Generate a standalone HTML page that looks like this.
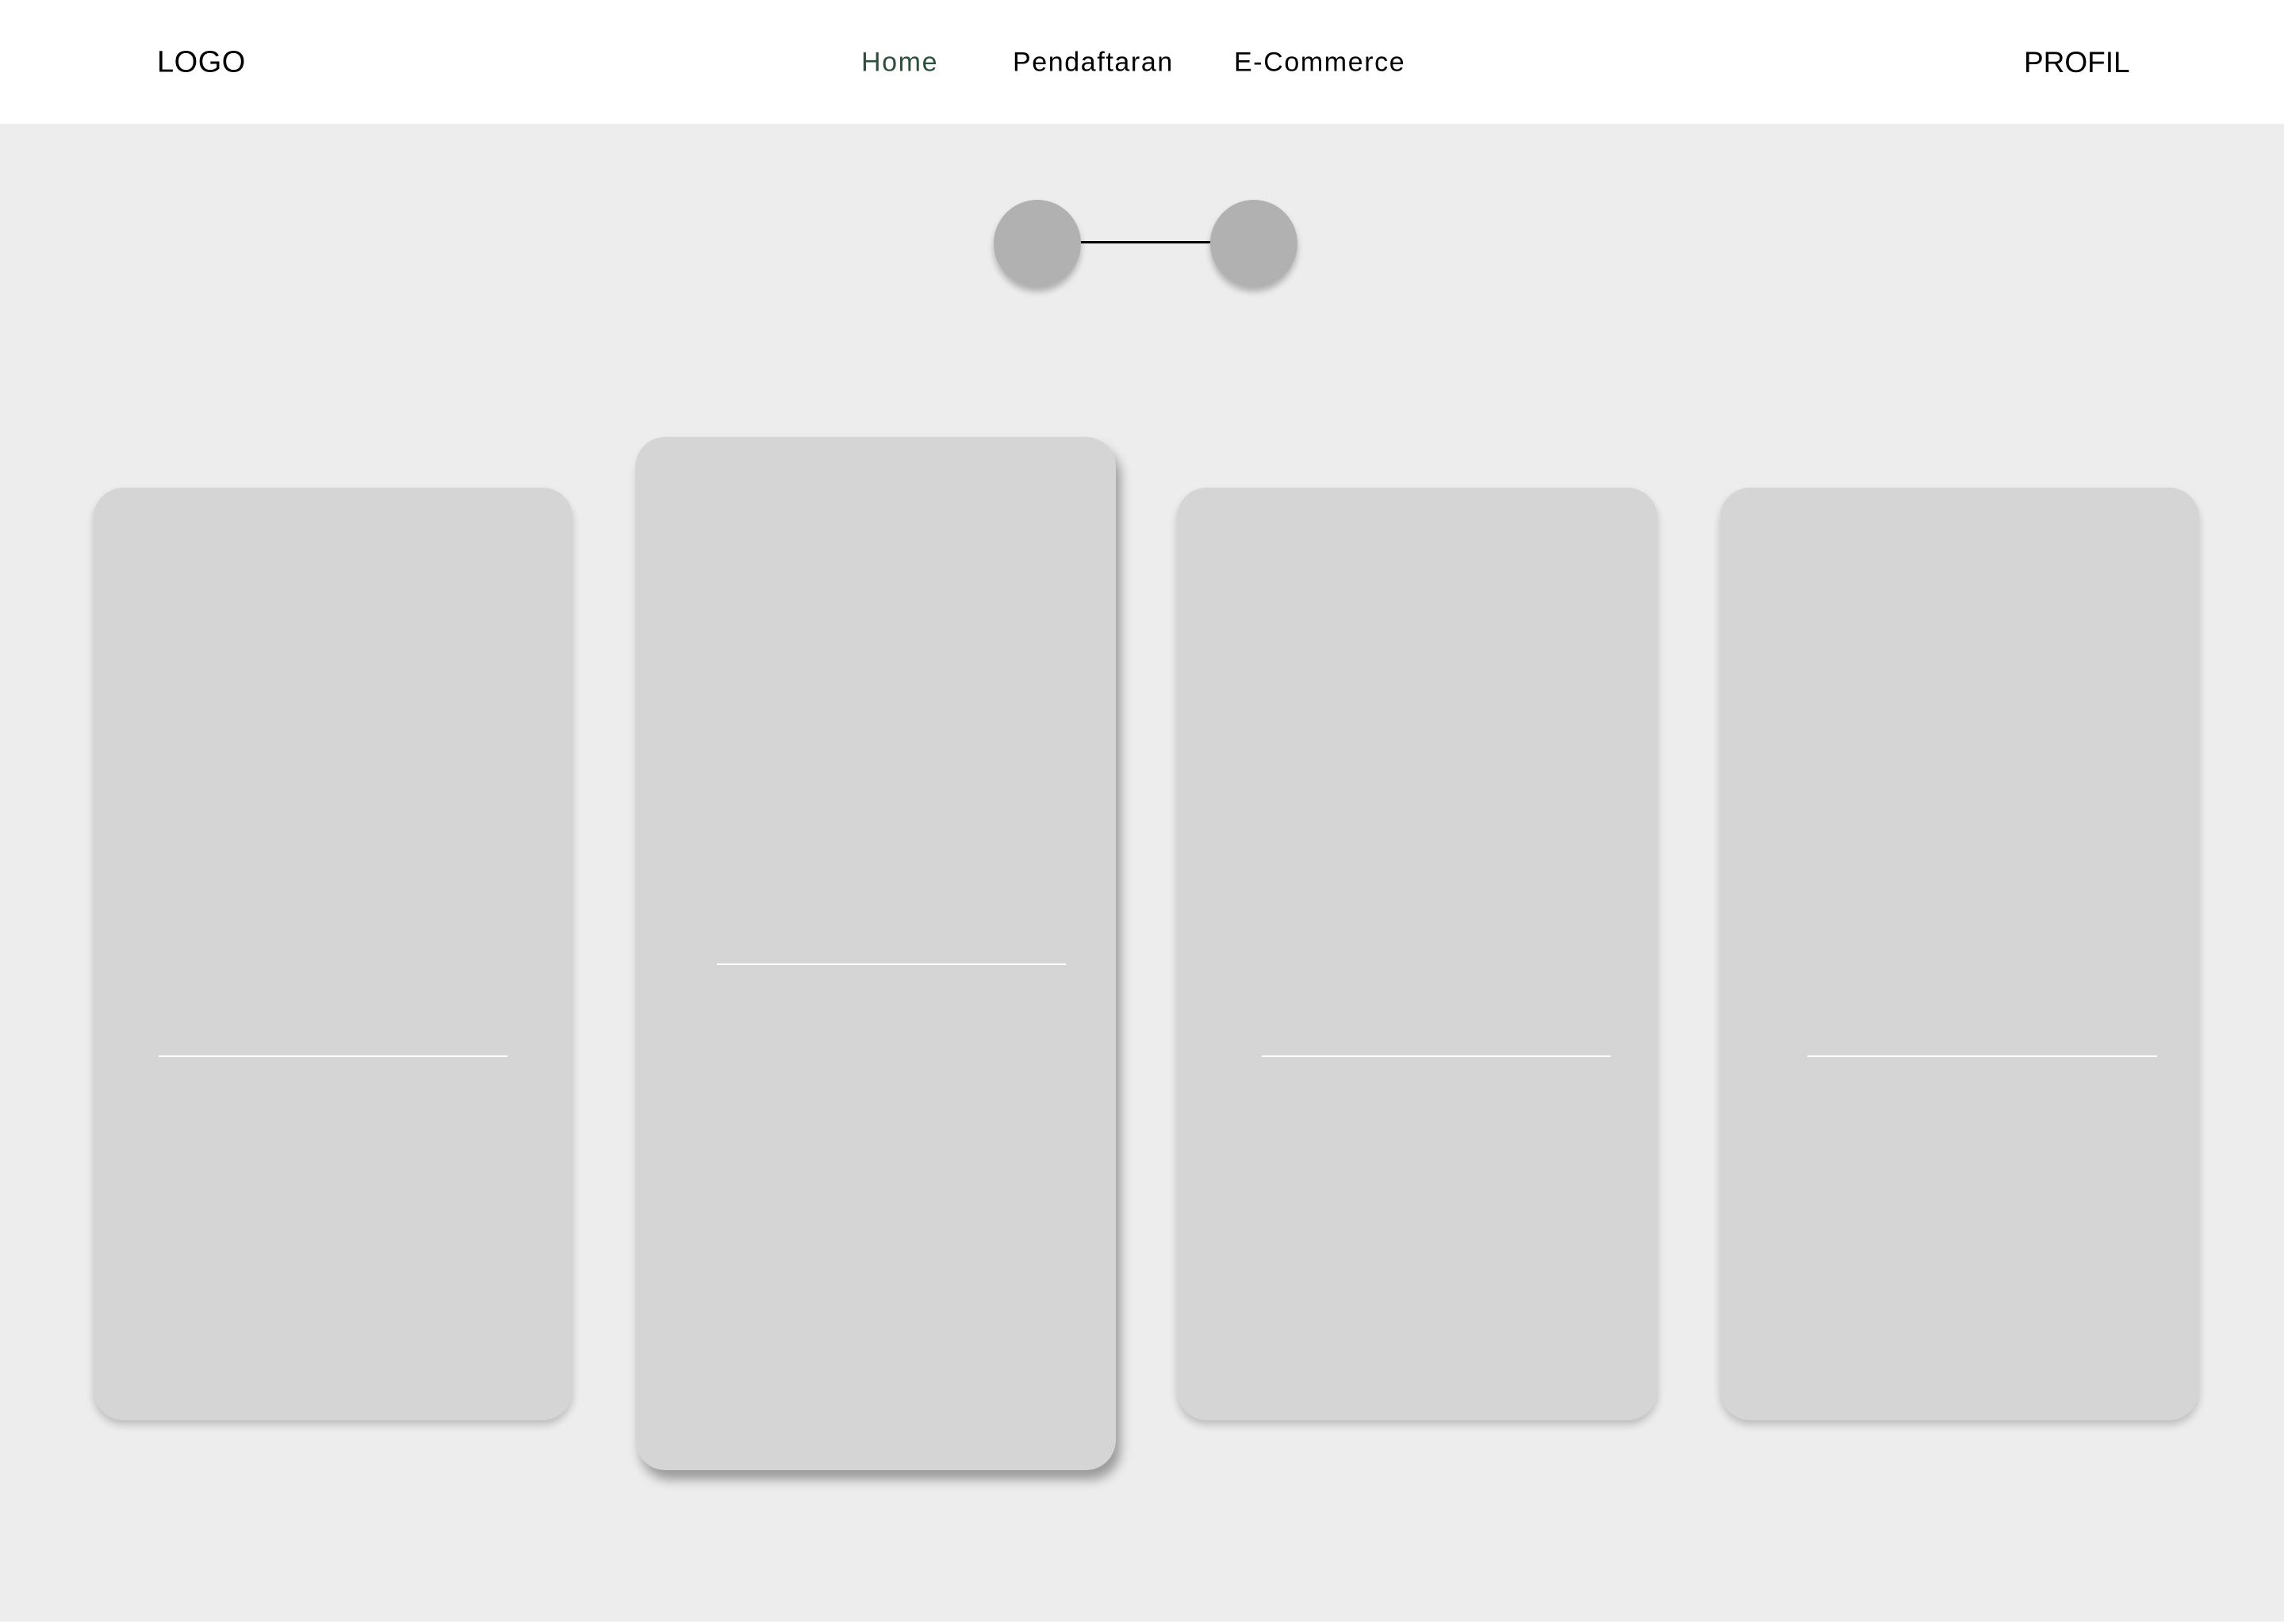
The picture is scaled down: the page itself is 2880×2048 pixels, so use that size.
<!DOCTYPE html>
<html><head><meta charset="utf-8"><style>
*{margin:0;padding:0;box-sizing:border-box}
html,body{width:2880px;height:2048px;overflow:hidden;background:#fff}
body{position:relative;font-family:"Liberation Sans",sans-serif}
.hdr{position:absolute;left:0;top:0;width:2880px;height:156px;background:#fff}
.main{position:absolute;left:0;top:156px;width:2880px;height:1889px;background:#ededed}
.t{position:absolute;top:79px;transform:translateY(-50%);font-size:34px;color:#000;white-space:nowrap;letter-spacing:1.6px}
.c{position:absolute;width:110px;height:110px;border-radius:50%;background:#b1b1b1;box-shadow:0 6px 8px rgba(0,0,0,.25);top:252px}
.card{position:absolute;background:#d5d5d5;border-radius:38px;box-shadow:0 6px 10px rgba(0,0,0,.2)}
.ln{position:absolute;height:2px;background:#fff}
</style></head><body>
<div class="hdr"></div>
<div class="main"></div>
<div class="t" style="left:198px;font-size:38px;letter-spacing:0.5px">LOGO</div>
<div class="t" style="left:1086px;color:#2f4f3e">Home</div>
<div class="t" style="left:1277px">Pendaftaran</div>
<div class="t" style="left:1556px">E-Commerce</div>
<div class="t" style="left:2552px;font-size:37px;letter-spacing:0">PROFIL</div>
<div style="position:absolute;left:1360px;top:304px;width:170px;height:3px;background:#000"></div>
<div class="c" style="left:1253px"></div>
<div class="c" style="left:1526px"></div>
<div class="card" style="left:118px;top:615px;width:604px;height:1176px"></div>
<div class="card" style="left:801px;top:551px;width:606px;height:1303px;box-shadow:6px 12px 14px rgba(0,0,0,.35)"></div>
<div class="card" style="left:1484px;top:615px;width:606px;height:1176px"></div>
<div class="card" style="left:2169px;top:615px;width:604px;height:1176px"></div>
<div class="ln" style="left:200px;top:1331px;width:440px"></div>
<div class="ln" style="left:904px;top:1215px;width:440px"></div>
<div class="ln" style="left:1591px;top:1331px;width:440px"></div>
<div class="ln" style="left:2279px;top:1331px;width:441px"></div>
</body></html>
